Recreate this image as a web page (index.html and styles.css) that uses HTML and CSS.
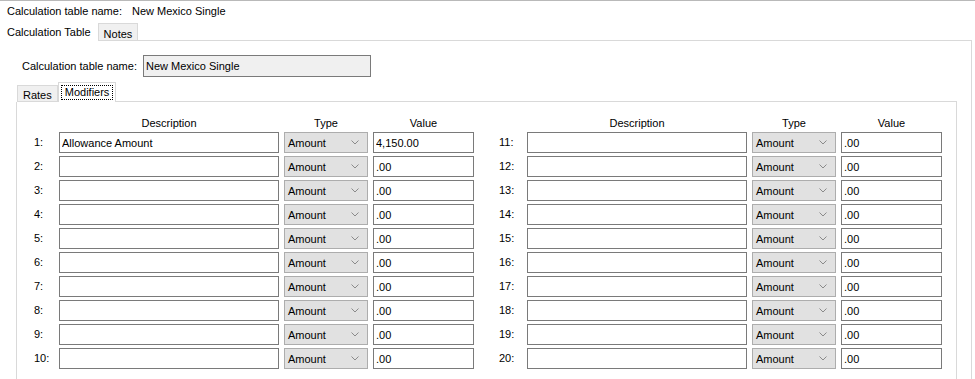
FILE: index.html
```html
<!DOCTYPE html>
<html lang="en">
<head>
  <meta charset="UTF-8">
  <meta name="viewport" content="width=device-width, initial-scale=1.0">
  <title>Calculation Table</title>
  <link rel="stylesheet" href="styles.css">
</head>
<body>
  <div class="title-bar">
    <span>Calculation table name:</span>
    <span>New Mexico Single</span>
  </div>

  <div class="tab-strip">
    <div class="tab active">Calculation Table</div>
    <div class="tab">Notes</div>
    <div class="tab-fill"></div>
  </div>

  <div class="panel">
    <div class="name-row">
      <label>Calculation table name:</label>
      <input class="name-input" value="New Mexico Single" readonly>
    </div>

    <div class="tab-strip inner">
      <div class="tab">Rates</div>
      <div class="tab active"><span class="focus">Modifiers</span></div>
      <div class="tab-fill"></div>
    </div>

    <div class="inner-panel">
      <div class="modifiers">
        <div class="grid left" id="left-grid">
          <div></div><div class="head">Description</div><div class="head">Type</div><div class="head">Value</div>
        </div>
        <div class="grid right" id="right-grid">
          <div></div><div class="head">Description</div><div class="head">Type</div><div class="head">Value</div>
        </div>
      </div>
    </div>
  </div>

  <script>
    // modifier rows, 1-10 on the left, 11-20 on the right
    const rows = [];
    for (let i = 1; i <= 20; i++) {
      rows.push({ n: i, desc: i === 1 ? 'Allowance Amount' : '', value: i === 1 ? '4,150.00' : '.00' });
    }

    const chevron = '<svg width="8" height="5" viewBox="0 0 8 5"><path d="M0.5 0.5 L4 4 L7.5 0.5" fill="none" stroke="#8a8a8a" stroke-width="1"/></svg>';

    function buildRow(row) {
      return `
        <div class="num">${row.n}:</div>
        <input class="field" value="${row.desc}">
        <div class="select"><span>Amount</span>${chevron}</div>
        <input class="field" value="${row.value}">
      `;
    }

    const left = document.getElementById('left-grid');
    const right = document.getElementById('right-grid');
    rows.forEach(row => {
      const target = row.n <= 10 ? left : right;
      target.insertAdjacentHTML('beforeend', buildRow(row));
    });
  </script>
</body>
</html>
```

FILE: styles.css
```css
* {
  box-sizing: border-box;
}
html, body {
  height: 100%;
}
body {
  margin: 0;
  font-family: 'Liberation Sans', Arial, sans-serif;
  font-size: 11px;
  color: #000;
  background-color: #fff;
  overflow: hidden;
  display: flex;
  flex-direction: column;
}
.title-bar {
  border-top: 1px solid #b9b9b9;
  height: 21px;
  padding: 4px 0 0 7px;
  display: flex;
  gap: 10px;
  flex-shrink: 0;
}
.tab-strip {
  display: flex;
  align-items: flex-end;
  height: 20px;
  flex-shrink: 0;
}
.tab {
  height: 18px;
  padding: 4px 5px 0 5px;
  background-color: #f0f0f0;
  border: 1px solid #d9d9d9;
}
.tab.active {
  height: 20px;
  padding: 4px 6px 0 6px;
  background-color: #fff;
  border-color: #fff;
  border-bottom: none;
}
.tab-fill {
  flex: 1;
  border-bottom: 1px solid #d9d9d9;
  margin-right: 3px;
}
.panel {
  flex: 1;
  display: flex;
  flex-direction: column;
  border-right: 1px solid #d9d9d9;
  margin-right: 3px;
  padding: 14px 14px 0 16px;
}
.name-row {
  display: flex;
  align-items: center;
  padding-left: 6px;
}
.name-row label {
  width: 121px;
}
.name-input {
  width: 228px;
  height: 22px;
  font: inherit;
  background-color: #f0f0f0;
  border: 1px solid #7a7a7a;
  padding: 0 2px;
  outline: none;
}
.tab-strip.inner {
  margin-top: 5px;
}
.tab-strip.inner .tab {
  height: 17px;
  padding: 3px 5px 0 5px;
  margin-left: 1px;
}
.tab-strip.inner .tab.active {
  height: 20px;
  margin-left: 0;
  padding: 2px 2px 0 2px;
  border: 1px solid #d9d9d9;
  border-bottom: none;
}
.tab-strip.inner .tab-fill {
  margin-right: 0;
}
.focus {
  display: inline-block;
  border: 1px dotted #000;
  padding: 0 3px 1px 3px;
}
.inner-panel {
  flex: 1;
  border-left: 1px solid #d9d9d9;
  border-right: 1px solid #d9d9d9;
  padding: 13px 0 0 17px;
}
.modifiers {
  display: flex;
  gap: 25px;
}
.grid {
  display: grid;
  grid-template-columns: 20px 220px 84px 101px;
  grid-auto-rows: 21px;
  grid-template-rows: 14px;
  column-gap: 5px;
  row-gap: 3px;
}
.grid.right {
  grid-template-columns: 23px 220px 84px 101px;
}
.head {
  text-align: center;
  line-height: 14px;
  padding-top: 1px;
}
.num {
  line-height: 21px;
}
.field {
  width: 100%;
  height: 21px;
  font: inherit;
  border: 1px solid #7a7a7a;
  padding: 0 2px;
  outline: none;
  background-color: #fff;
}
.select {
  display: flex;
  align-items: center;
  justify-content: space-between;
  height: 21px;
  padding: 0 8px 0 3px;
  background-color: #e1e1e1;
  border: 1px solid #adadad;
}
```
